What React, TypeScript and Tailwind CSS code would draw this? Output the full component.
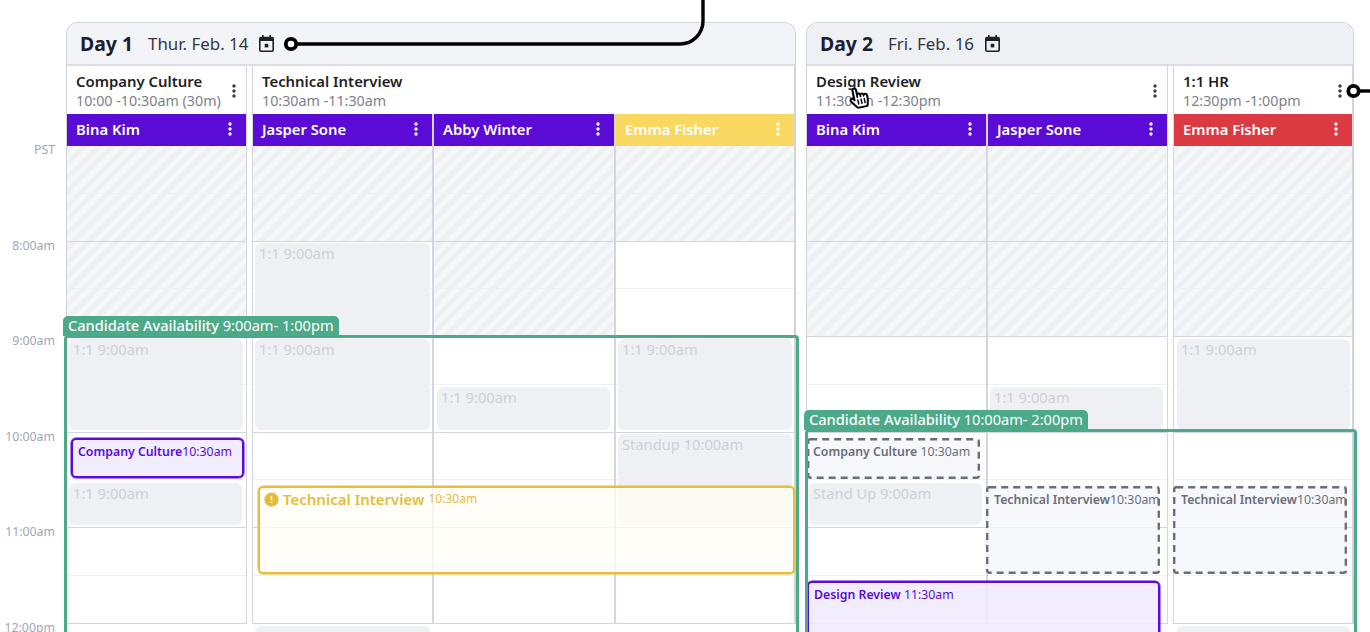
import { FaHandPointer, FaRegHandPointer } from "react-icons/fa";
import { MdError, MdMoreVert } from "react-icons/md";

const BODY_TOP = 146;
const HOURS = ["PST", "8:00am", "9:00am", "10:00am", "11:00am", "12:00pm"];

const hatchClass =
  "bg-[repeating-linear-gradient(135deg,#eef0f3_0px,#eef0f3_5px,#f6f7f9_5px,#f6f7f9_10px)]";

interface Column {
  name: string;
  color: string;
  width: number;
  hatch: number; // px of body height that is hatched
}

interface Group {
  title: string;
  time: string;
  menu: boolean;
  columns: Column[];
}

// all boxes below are in page coordinates, the layer subtracts its origin
type Box = { x: number; y: number; w: number; h: number };

const PURPLE = "bg-[#5b0bd6]";

const day1: Group[] = [
  {
    title: "Company Culture",
    time: "10:00 -10:30am (30m)",
    menu: true,
    columns: [{ name: "Bina Kim", color: PURPLE, width: 179, hatch: 191 }],
  },
  {
    title: "Technical Interview",
    time: "10:30am -11:30am",
    menu: false,
    columns: [
      { name: "Jasper Sone", color: PURPLE, width: 180, hatch: 95 },
      { name: "Abby Winter", color: PURPLE, width: 181, hatch: 191 },
      { name: "Emma Fisher", color: "bg-[#f9d862]", width: 178, hatch: 95 },
    ],
  },
];

const day2: Group[] = [
  {
    title: "Design Review",
    time: "11:30am -12:30pm",
    menu: true,
    columns: [
      { name: "Bina Kim", color: PURPLE, width: 180, hatch: 191 },
      { name: "Jasper Sone", color: PURPLE, width: 179, hatch: 191 },
    ],
  },
  {
    title: "1:1 HR",
    time: "12:30pm -1:00pm",
    menu: true,
    columns: [{ name: "Emma Fisher", color: "bg-[#dc3a42]", width: 178, hatch: 191 }],
  },
];

const day1Busy: (Box & { label: string })[] = [
  { x: 255, y: 243, w: 175, h: 92, label: "1:1 9:00am" },
  { x: 69, y: 339, w: 174, h: 91, label: "1:1 9:00am" },
  { x: 255, y: 339, w: 175, h: 91, label: "1:1 9:00am" },
  { x: 437, y: 387, w: 173, h: 43, label: "1:1 9:00am" },
  { x: 618, y: 339, w: 174, h: 91, label: "1:1 9:00am" },
  { x: 618, y: 434, w: 174, h: 91, label: "Standup 10:00am" },
  { x: 69, y: 483, w: 173, h: 42, label: "1:1 9:00am" },
  { x: 255, y: 626, w: 175, h: 40, label: "1:1 9:00am" },
];

const day2Busy: (Box & { label: string })[] = [
  { x: 990, y: 387, w: 173, h: 43, label: "1:1 9:00am" },
  { x: 1177, y: 339, w: 173, h: 91, label: "1:1 9:00am" },
  { x: 809, y: 483, w: 173, h: 42, label: "Stand Up 9:00am" },
  { x: 1177, y: 626, w: 173, h: 40, label: "1:1 9:00am" },
];

function CalendarIcon() {
  return (
    <svg width={15} height={17} viewBox="0 0 15 17" className="shrink-0 text-[#1f2128]" fill="currentColor">
      <rect x={3} y={0} width={1.7} height={3.5} />
      <rect x={10.3} y={0} width={1.7} height={3.5} />
      <rect x={0.8} y={2.6} width={13.4} height={13.6} rx={1.2} fill="none" stroke="currentColor" strokeWidth={1.6} />
      <rect x={1} y={3} width={13} height={3} />
      <rect x={5.7} y={8.8} width={3.6} height={3.6} />
    </svg>
  );
}

function BodyRows({ hatch }: { hatch: number }) {
  return (
    <div className="relative">
      <div className={`absolute inset-x-0 top-0 ${hatchClass}`} style={{ height: hatch }} />
      {Array.from({ length: 10 }).map((_, i) => (
        <div
          key={i}
          className={`relative h-[47.75px] border-b ${
            i % 2 === 1 ? "border-[#d4d5de]" : "border-[#eff0f3]"
          }`}
        />
      ))}
    </div>
  );
}

function ColumnView({ col, last }: { col: Column; last: boolean }) {
  return (
    <div
      className={`shrink-0 ${last ? "" : "border-r-2 border-[#d4d5de]"}`}
      style={{ width: col.width + (last ? 0 : 1) }}
    >
      <div
        className={`flex h-[32px] items-center justify-between pb-[1px] pl-[9px] pr-[6px] text-[14.8px] font-semibold text-white ${col.color}`}
      >
        <span>{col.name}</span>
        <MdMoreVert size={20} className="-mt-[2px]" />
      </div>
      <BodyRows hatch={col.hatch} />
    </div>
  );
}

function GroupView({ group }: { group: Group }) {
  return (
    <div className="border-x border-[#d4d5de] first:border-l-0 last:border-r-0">
      <div className="relative h-[48px] pl-[9px] pt-[6px]">
        <div className="text-[14.9px] leading-[19px] font-semibold text-[#1d1f26]">{group.title}</div>
        <div className="text-[14.3px] leading-[19px] text-[#7c7f8b]">{group.time}</div>
        {group.menu && <MdMoreVert size={20} className="absolute right-[2px] top-[15px] text-[#3a3c46]" />}
      </div>
      <div className="flex">
        {group.columns.map((col, i) => (
          <ColumnView key={col.name} col={col} last={i === group.columns.length - 1} />
        ))}
      </div>
    </div>
  );
}

function DayCard({
  title,
  date,
  groups,
  headerBg,
  origin,
  children,
}: {
  title: string;
  date: string;
  groups: Group[];
  headerBg: string;
  origin: number;
  children: (at: (b: Box) => React.CSSProperties) => React.ReactNode;
}) {
  const at = (b: Box) => ({ left: b.x - origin, top: b.y - BODY_TOP, width: b.w, height: b.h });
  return (
    <div className="relative shrink-0 rounded-t-xl border border-[#d0d2da] border-b-0">
      <div className={`flex h-[43px] items-center gap-[15px] rounded-t-xl border-b-2 border-[#dcdde4] pl-[13px] ${headerBg}`}>
        <span className="text-[19.4px] font-bold text-[#1b2030]">{title}</span>
        <span className="flex items-center gap-[11px] pt-[1px] text-[16.9px] text-[#343743]">
          {date}
          <CalendarIcon />
        </span>
      </div>
      <div className="relative flex gap-[5px]">
        {groups.map((g) => (
          <GroupView key={g.title} group={g} />
        ))}
        <div className="absolute left-0 top-[80px]">{children(at)}</div>
      </div>
    </div>
  );
}

function Busy({ box, style }: { box: { label: string }; style: React.CSSProperties }) {
  return (
    <div
      className="absolute rounded-md bg-[#eff0f4] pl-[4px] text-[14.7px] leading-[20px] text-[#ced0d7]"
      style={style}
    >
      {box.label}
    </div>
  );
}

function Slot({
  title,
  time,
  kind,
  pad,
  style,
}: {
  title: string;
  time: string;
  kind: "selected" | "dashed";
  pad: string;
  style: React.CSSProperties;
}) {
  const dashed = kind === "dashed";
  const box = dashed
    ? "rounded-[2px] pt-[5px] bg-[#f5f6fa]/80 text-[#6b6d7a]"
    : "rounded-[5px] pt-[3px] border-2 border-[#5b0bd6] shadow-[0_0_0_0.5px_#5b0bd6] bg-[#f0ebfd]/90 text-[#5b0bd6]";
  const w = Number(style.width);
  const h = Number(style.height);
  return (
    <div className={`absolute whitespace-nowrap text-[12.3px] leading-[18px] ${pad} ${box}`} style={style}>
      {dashed && (
        <svg className="absolute left-0 top-0" width={w} height={h} fill="none">
          <rect x={1.2} y={1.2} width={w - 2.4} height={h - 2.4} rx={2} stroke="#6b6d7a" strokeWidth={2.4} strokeDasharray="7 5" />
        </svg>
      )}
      <span className="font-semibold">{title}</span>
      {time}
    </div>
  );
}

function Availability({ label, time, style }: { label: string; time: string; style: React.CSSProperties }) {
  return (
    <div className="pointer-events-none absolute rounded-t-[4px] border-[3px] border-b-0 border-[#4caa88]" style={style}>
      <div className="absolute -left-[4px] -top-[22px] flex h-[20px] items-center rounded-t-[5px] bg-[#4caa88] pl-[5px] pr-[5px] text-[14.6px] text-white">
        <span className="font-medium">{label}</span>
        <span>&nbsp;{time}</span>
      </div>
    </div>
  );
}

export default function App() {
  return (
    <div className="relative h-[632px] w-[1370px] overflow-hidden bg-white font-['Noto_Sans',sans-serif]">
      <div className="flex items-start pt-[22px]">
        <div className="w-[66px] shrink-0 pr-[11px] pt-[120px] text-right text-[12.3px] leading-[16px] text-[#a3a6b1]">
          {HOURS.map((h) => (
            <div key={h} className="h-[95.5px]">
              {h}
            </div>
          ))}
        </div>
        <div className="flex gap-[10px]">
          <DayCard title="Day 1" date="Thur. Feb. 14" groups={day1} headerBg="bg-[#f3f4f8]" origin={67}>
            {(at) => (
              <>
                {day1Busy.map((b) => (
                  <Busy key={`${b.x}-${b.y}`} box={b} style={at(b)} />
                ))}
                <Slot title="Company Culture" time="10:30am" kind="selected" pad="pl-[5px]" style={at({ x: 71, y: 438, w: 173, h: 40 })} />
                <div
                  className="absolute rounded-[5px] border-2 border-[#e5bd3e] bg-[#fffdf6]/75 text-[#e5bd3e] shadow-[0_0_0_0.5px_#e5bd3e]"
                  style={at({ x: 258, y: 486, w: 537, h: 88 })}
                >
                  <div className="flex items-center pl-[3px]">
                    <MdError size={17} />
                    <span className="ml-[3px] text-[15px] font-semibold">Technical Interview</span>
                    <span className="ml-[4px] text-[12px]">10:30am</span>
                  </div>
                </div>
                <Availability label="Candidate Availability" time="9:00am- 1:00pm" style={at({ x: 64, y: 335, w: 735, h: 320 })} />
              </>
            )}
          </DayCard>
          <DayCard title="Day 2" date="Fri. Feb. 16" groups={day2} headerBg="bg-[#eff0f4]" origin={807}>
            {(at) => (
              <>
                {day2Busy.map((b) => (
                  <Busy key={`${b.x}-${b.y}`} box={b} style={at(b)} />
                ))}
                <Slot title="Company Culture" time=" 10:30am" kind="dashed" pad="pl-[6px]" style={at({ x: 807, y: 438, w: 173, h: 41 })} />
                <Slot title="Technical Interview" time="10:30am" kind="dashed" pad="pl-[8px]" style={at({ x: 986, y: 486, w: 174, h: 88 })} />
                <Slot title="Technical Interview" time="10:30am" kind="dashed" pad="pl-[8px]" style={at({ x: 1173, y: 486, w: 174, h: 88 })} />
                <Slot title="Design Review" time=" 11:30am" kind="selected" pad="pl-[5px]" style={at({ x: 807, y: 581, w: 353, h: 90 })} />
                <Availability label="Candidate Availability" time="10:00am- 2:00pm" style={at({ x: 805, y: 429, w: 552, h: 240 })} />
              </>
            )}
          </DayCard>
        </div>
      </div>

      {/* connector lines */}
      <svg className="pointer-events-none absolute inset-0" width={1370} height={632} fill="none" stroke="#000" strokeWidth={3.4}>
        <path d="M297 44H680A23 23 0 0 0 703 21V0" />
        <circle cx={291} cy={44} r={5.2} fill="#fff" strokeWidth={3.8} />
        <path d="M1359 91H1370" />
        <circle cx={1353.5} cy={91} r={5.2} fill="#fff" strokeWidth={3.8} />
      </svg>

      {/* cursor */}
      <div className="absolute left-[848px] top-[87px] h-[24px] w-[18px] -rotate-12">
        <FaHandPointer size={22} className="absolute left-0 top-0 text-white" />
        <FaRegHandPointer size={22} className="absolute left-0 top-0 text-black" />
      </div>
    </div>
  );
}
